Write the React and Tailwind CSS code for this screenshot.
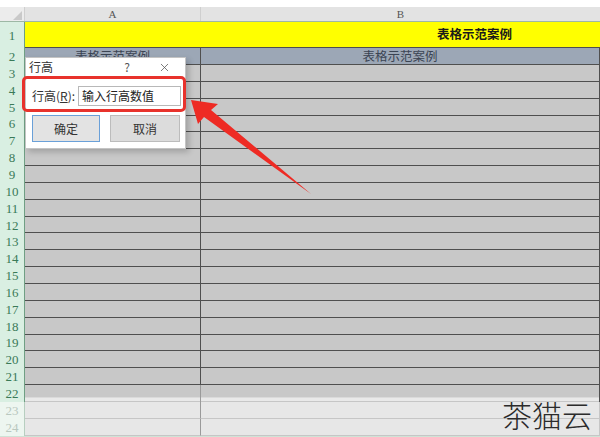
import React from 'react';
import { X } from 'lucide-react';

const cjk = "font-['Noto_Sans_CJK_SC','Liberation_Sans',sans-serif]";

const RowHead = ({ n, light, bottom }) => (
    <div className={`w-[25px] shrink-0 flex justify-center border-r text-[13px] leading-none font-['Liberation_Serif',serif] ${bottom ? 'items-end pb-[6px]' : 'items-center'} ${light ? 'bg-[#edf6f0] text-[#b9c8bf] border-[#b7cfc0]' : 'bg-[#d9efe2] text-[#3a7a58] border-[#6f9f84]'}`}>
        {n}
    </div>
);

const GrayRow = ({ n }) => (
    <div className="flex h-[16.85px]">
        <RowHead n={n} />
        <div className="w-[176px] bg-[#c8c8c8] border-b border-r border-[#4f4f4f]" />
        <div className="flex-1 bg-[#c8c8c8] border-b border-r border-[#4f4f4f]" />
    </div>
);

const LightRow = ({ n }) => (
    <div className="flex h-[17px]">
        <RowHead n={n} light />
        <div className="w-[176px] bg-[#e7e7e7] border-b border-r border-[#c6c6c6] border-r-[#9a9a9a]" />
        <div className="flex-1 bg-[#e7e7e7] border-b border-r border-[#c6c6c6]" />
    </div>
);

const App = () => {
    const grayRows = [];
    for (let i = 3; i <= 21; i++) grayRows.push(i);

    return (
        <div className={`relative w-[600px] h-[437px] bg-white overflow-hidden ${cjk}`}>
            <div className="pt-[7px]">
                {/* column header */}
                <div className="flex h-[15px] border-b border-[#9db8a5] bg-[#e3e3e3] text-[11px] text-[#555] font-['Liberation_Serif',serif]">
                    <div className="relative w-[25px] bg-[#ececec] border-r border-[#cfcfcf]">
                        <svg className="absolute right-[2px] bottom-[1px]" width="9" height="9" viewBox="0 0 9 9">
                            <polygon points="9,0 9,9 0,9" fill="#c9c9c9" />
                        </svg>
                    </div>
                    <div className="w-[176px] flex items-center justify-center border-r border-[#cfcfcf]">A</div>
                    <div className="flex-1 flex items-center justify-center">B</div>
                </div>

                {/* row 1 */}
                <div className="flex h-[26px]">
                    <RowHead n={1} bottom />
                    <div className="flex-1 bg-[#ffff00] border-b border-[#4f4f4f] flex items-center pl-[412px] text-[12.5px] font-bold text-[#1a1a1a]">
                        表格示范案例
                    </div>
                </div>

                {/* row 2 */}
                <div className="flex h-[17px]">
                    <RowHead n={2} />
                    <div className="w-[176px] bg-[#9ca7b6] border-b border-r border-[#4f4f4f] flex items-center justify-center text-[12.5px] text-[#3b4453]">表格示范案例</div>
                    <div className="flex-1 bg-[#9ca7b6] border-b border-r border-[#4f4f4f] flex items-center justify-center text-[12.5px] text-[#3b4453]">表格示范案例</div>
                </div>

                {grayRows.map(n => <GrayRow key={n} n={n} />)}

                {/* row 22 cut */}
                <div className="flex h-[17px]">
                    <RowHead n={22} />
                    <div className="w-[176px] flex flex-col border-r border-[#9a9a9a]">
                        <div className="h-[12px] bg-[#c8c8c8]" />
                        <div className="flex-1 bg-[#e9e9e9] border-t border-b border-t-[#dadada] border-b-[#c6c6c6]" />
                    </div>
                    <div className="flex-1 flex flex-col border-r border-[#4f4f4f]">
                        <div className="h-[12px] bg-[#c8c8c8]" />
                        <div className="flex-1 bg-[#e9e9e9] border-t border-b border-t-[#dadada] border-b-[#c6c6c6]" />
                    </div>
                </div>
                <LightRow n={23} />
                <LightRow n={24} />
                <div className="h-[1px] bg-[#cfe3d6]" />
            </div>

            {/* dialog */}
            <div className="absolute left-[25px] top-[57px] w-[161px] bg-white border border-[#c4c4c4] shadow-[3px_3px_6px_rgba(0,0,0,0.2)] text-[12px] text-[#333]">
                <div className="flex items-center h-[18px] pl-[3px] pr-[14px]">
                    <span>行高</span>
                    <span className="ml-auto text-[12px] text-[#555]">?</span>
                    <X className="ml-[28px] w-[13px] h-[13px] text-[#555]" strokeWidth={1.4} />
                </div>
                <div className="-ml-[4px] -mr-[1px] h-[36px] border-[3px] border-[#e8322c] rounded-[5px] flex items-center pl-[7px] pr-[2px] pt-[3px]">
                    <span>行高(<span className="underline">R</span>):</span>
                    <div className="ml-auto w-[103px] h-[20px] border border-[#b8b8b8] bg-white flex items-center pl-[3px] text-[#222]">输入行高数值</div>
                </div>
                <div className="flex gap-[10px] pl-[6px] mt-[3px] pb-[6px]">
                    <div className="w-[68px] h-[27px] border border-[#6aa0d8] bg-[#e3e3e3] flex items-center justify-center">确定</div>
                    <div className="w-[70px] h-[27px] border border-[#bcbcbc] bg-[#dcdcdc] flex items-center justify-center">取消</div>
                </div>
            </div>

            {/* annotation arrow */}
            <svg className="absolute left-0 top-0 pointer-events-none" width="600" height="437" viewBox="0 0 600 437">
                <polygon points="191,100 218,104 211,110 311,194 204,117 198,124" fill="#ee2b24" />
            </svg>

            {/* watermark */}
            <div className="absolute right-[8px] top-[399px] text-[30px] leading-none font-light text-[#2b2b2b]">茶猫云</div>
        </div>
    );
};

export default App;
